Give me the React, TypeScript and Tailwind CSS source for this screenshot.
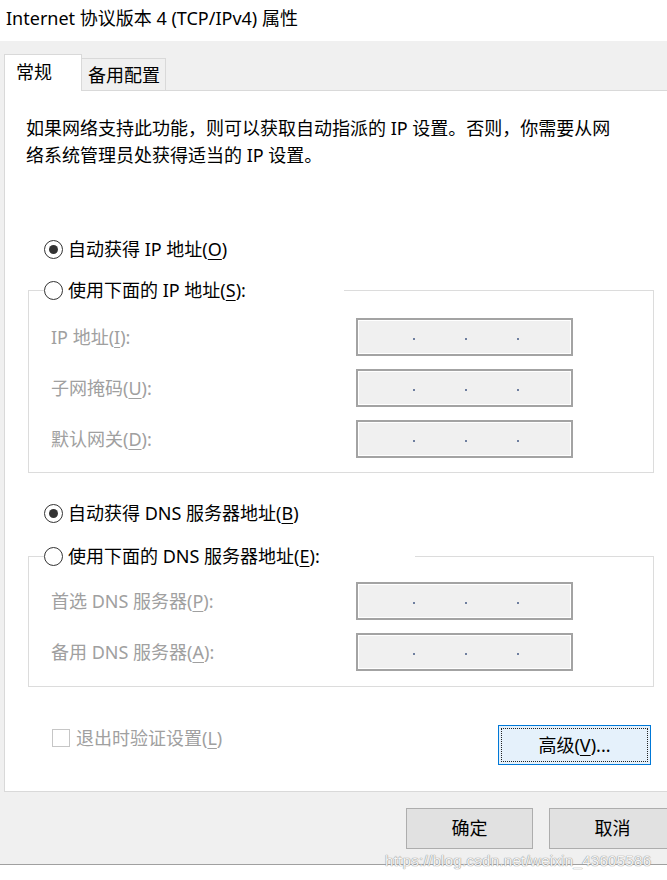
import React from "react";

function U({ c }: { c: string }) {
  return <span className="underline underline-offset-[3px] decoration-1">{c}</span>;
}

function Radio({ checked }: { checked?: boolean }) {
  return (
    <span className="w-[19px] h-[19px] rounded-full border border-[#333333] bg-white flex items-center justify-center shrink-0">
      {checked && <span className="w-[9px] h-[9px] rounded-full bg-[#333333]" />}
    </span>
  );
}

function IPBox() {
  return (
    <div className="w-[217px] h-[38px] border-2 border-[#a3a3a3] bg-[#f0f0f0] shadow-[inset_0_0_0_1px_#ffffff] flex items-center pt-[3px]">
      <div className="flex ml-[55px] gap-[50px]">
        <span className="w-[2px] h-[2px] bg-[#6f7f9f]" />
        <span className="w-[2px] h-[2px] bg-[#6f7f9f]" />
        <span className="w-[2px] h-[2px] bg-[#6f7f9f]" />
      </div>
    </div>
  );
}

function Row({ children }: { children: React.ReactNode }) {
  return (
    <div className="flex items-center h-[38px]">
      <div className="w-[305px] text-[18px] leading-[24px] text-[#a0a0a0]">{children}</div>
      <IPBox />
    </div>
  );
}

export default function App() {
  return (
    <div className="w-[667px] h-[880px] overflow-hidden bg-white relative font-['Noto_Sans','Noto_Sans_CJK_SC',sans-serif] text-black">
      {/* title bar */}
      <div className="h-[41px] pl-[6px] pt-[6px] text-[18px] leading-[24px] bg-white">
        Internet 协议版本 4 (TCP/IPv4) 属性
      </div>

      {/* body */}
      <div className="bg-[#f0f0f0] px-[4px] pt-[13px] pb-[15px] border-b border-[#a0a0a0]">
        {/* tabs */}
        <div className="flex items-end h-[36px]">
          <div className="relative z-10 -mb-px h-[37px] w-[78px] bg-white border border-b-0 border-[#d9d9d9] pl-[11px] pt-[4px] text-[18px] leading-[26px]">
            常规
          </div>
          <div className="h-[32px] w-[84px] border-t border-r border-[#d9d9d9] bg-[#f0f0f0] pl-[6px] pt-[3px] text-[18px] leading-[26px]">
            备用配置
          </div>
        </div>

        {/* panel */}
        <div className="w-[700px] bg-white border border-[#d9d9d9] pb-[26px]">
          <p className="mt-[24px] pl-[21px] text-[18px] leading-[27px]">
            如果网络支持此功能，则可以获取自动指派的 IP 设置。否则，你需要从网
            <br />
            络系统管理员处获得适当的 IP 设置。
          </p>

          <div className="mt-[68px] ml-[39px] h-[24px] flex items-center gap-[5px] text-[18px] leading-[24px]">
            <Radio checked />
            <span>
              自动获得 IP 地址(<U c="O" />)
            </span>
          </div>

          <fieldset className="mt-[17px] ml-[23px] w-[626px] border border-[#dcdcdc] pl-[22px] pb-[14px]">
            <legend className="ml-[-7px] w-[300px] h-[24px]">
              <div className="flex items-center gap-[5px] h-[24px] text-[18px] leading-[24px]">
                <Radio />
                <span>
                  使用下面的 IP 地址(<U c="S" />):
                </span>
              </div>
            </legend>
            <div className="mt-[16px] flex flex-col gap-[13px]">
              <Row>
                IP 地址(<U c="I" />):
              </Row>
              <Row>
                子网掩码(<U c="U" />):
              </Row>
              <Row>
                默认网关(<U c="D" />):
              </Row>
            </div>
          </fieldset>

          <div className="mt-[28px] ml-[39px] h-[24px] flex items-center gap-[5px] text-[18px] leading-[24px]">
            <Radio checked />
            <span>
              自动获得 DNS 服务器地址(<U c="B" />)
            </span>
          </div>

          <fieldset className="mt-[19px] ml-[23px] w-[626px] border border-[#dcdcdc] pl-[22px] pb-[15px]">
            <legend className="ml-[-7px] w-[371px] h-[24px]">
              <div className="flex items-center gap-[5px] h-[24px] text-[18px] leading-[24px]">
                <Radio />
                <span>
                  使用下面的 DNS 服务器地址(<U c="E" />):
                </span>
              </div>
            </legend>
            <div className="mt-[14px] flex flex-col gap-[13px]">
              <Row>
                首选 DNS 服务器(<U c="P" />):
              </Row>
              <Row>
                备用 DNS 服务器(<U c="A" />):
              </Row>
            </div>
          </fieldset>

          <div className="mt-[38px] flex items-start">
            <div className="ml-[47px] w-[446px] mt-[1px] h-[24px] flex items-center gap-[6px] text-[18px] leading-[24px] text-[#a0a0a0]">
              <span className="w-[18px] h-[18px] border border-[#c6c6c6] bg-white shrink-0" />
              <span>
                退出时验证设置(<U c="L" />)
              </span>
            </div>
            <div className="w-[153px] h-[40px] bg-[#e5f1fb] border border-[#0078d7] p-[2px]">
              <div className="h-full border border-dotted border-[#222222] flex items-center justify-center text-[18px] leading-[24px]">
                高级(<U c="V" />)...
              </div>
            </div>
          </div>
        </div>

        {/* dialog buttons */}
        <div className="mt-[16px] ml-[402px] flex gap-[16px]">
          <div className="w-[127px] h-[41px] shrink-0 bg-[#e1e1e1] border border-[#adadad] flex items-center justify-center text-[18px]">
            确定
          </div>
          <div className="w-[127px] h-[41px] shrink-0 bg-[#e1e1e1] border border-[#adadad] flex items-center justify-center text-[18px]">
            取消
          </div>
        </div>
      </div>

      {/* watermark */}
      <div className="absolute left-[385px] top-[851px] text-[15px] leading-[20px] tracking-[0.3px] font-['Liberation_Sans',sans-serif] text-[#f5f5f5] [text-shadow:0_0_1px_#8a8a8a,0_0_1px_#8a8a8a]">
        https://blog.csdn.net/weixin_43605586
      </div>
    </div>
  );
}
